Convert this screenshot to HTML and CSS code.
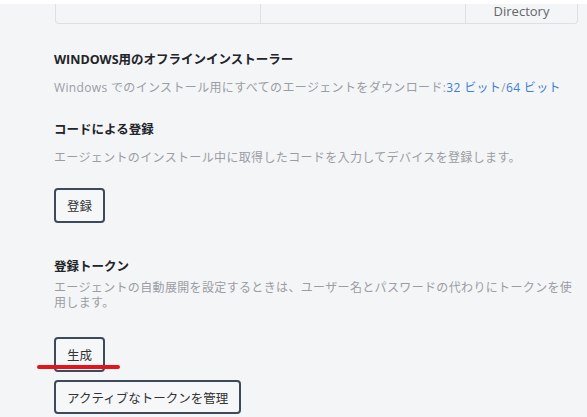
FILE: index.html
```html
<!DOCTYPE html>
<html lang="ja">
<head>
<meta charset="utf-8">
<title>エージェント登録</title>
<link rel="stylesheet" href="styles.css">
</head>
<body>
<div class="top-strip"></div>
<div class="table-tail">
  <div class="cell"></div>
  <div class="cell"></div>
  <div class="cell cell-last">Directory</div>
</div>
<main class="content">
  <section class="sec sec-first">
    <h2 class="sec-title">WINDOWS用のオフラインインストーラー</h2>
    <p class="sec-desc">Windows でのインストール用にすべてのエージェントをダウンロード:<a class="link" href="#">32 ビット</a>/<a class="link" href="#">64 ビット</a></p>
  </section>
  <section class="sec sec-second">
    <h2 class="sec-title">コードによる登録</h2>
    <p class="sec-desc">エージェントのインストール中に取得したコードを入力してデバイスを登録します。</p>
    <button class="btn btn-first">登録</button>
  </section>
  <section class="sec sec-third">
    <h2 class="sec-title">登録トークン</h2>
    <p class="sec-desc sec-desc-wrap">エージェントの自動展開を設定するときは、ユーザー名とパスワードの代わりにトークンを使用します。</p>
    <div class="btn-wrap">
      <button class="btn btn-first">生成</button>
      <span class="mark"></span>
    </div>
    <button class="btn btn-next">アクティブなトークンを管理</button>
  </section>
</main>
</body>
</html>
```
FILE: styles.css
```css
html, body {
  margin: 0;
  padding: 0;
}
body {
  background: #f4f5f7;
  font-family: "Open Sans", "Noto Sans CJK JP", sans-serif;
  color: #222;
  width: 587px;
  height: 417px;
  overflow: hidden;
}
.top-strip {
  height: 4px;
  background: #ffffff;
}
.table-tail {
  box-sizing: border-box;
  margin-left: 55px;
  width: 523px;
  height: 20px;
  border: 1px solid #dde0e4;
  border-top: none;
  border-radius: 0 0 4px 4px;
  display: grid;
  grid-template-columns: 205px 205px 1fr;
}
.cell {
  border-right: 1px solid #dde0e4;
  font-size: 13px;
  line-height: 14px;
  color: #62666d;
  text-align: center;
}
.cell-last {
  border-right: none;
}
.content {
  padding-left: 54px;
  width: 522px;
  display: flex;
  flex-direction: column;
}
.sec {
  display: flex;
  flex-direction: column;
  align-items: flex-start;
}
.sec-first { margin-top: 26px; }
.sec-second { margin-top: 24px; }
.sec-third { margin-top: 34px; }
.sec-title {
  margin: 0;
  font-size: 12.5px;
  font-weight: 700;
  line-height: 20px;
  color: #222428;
}
.sec-desc {
  margin: 10px 0 0;
  font-size: 12px;
  line-height: 16px;
  color: #9a9da3;
  letter-spacing: 0.35px;
}
.sec-desc-wrap {
  margin-top: 3px;
  line-height: 15px;
}
.link {
  color: #3d7dd6;
  text-decoration: none;
}
.btn {
  box-sizing: border-box;
  height: 35px;
  padding: 0 11px;
  border: 2px solid #3e4a5a;
  border-radius: 4px;
  background: #f6f7f9;
  font-family: "Open Sans", "Noto Sans CJK JP", sans-serif;
  font-size: 12.5px;
  color: #333;
  cursor: pointer;
}
.btn-first { margin-top: 22px; }
.btn-wrap {
  position: relative;
  margin-top: 27px;
}
.btn-wrap .btn-first { margin-top: 0; display: block; }
.btn-next {
  margin-top: 8px;
  height: 34px;
}
.mark {
  position: absolute;
  left: -17px;
  top: 28px;
  width: 83px;
  height: 4px;
  border-radius: 2px;
  background: #e3141b;
}
```
